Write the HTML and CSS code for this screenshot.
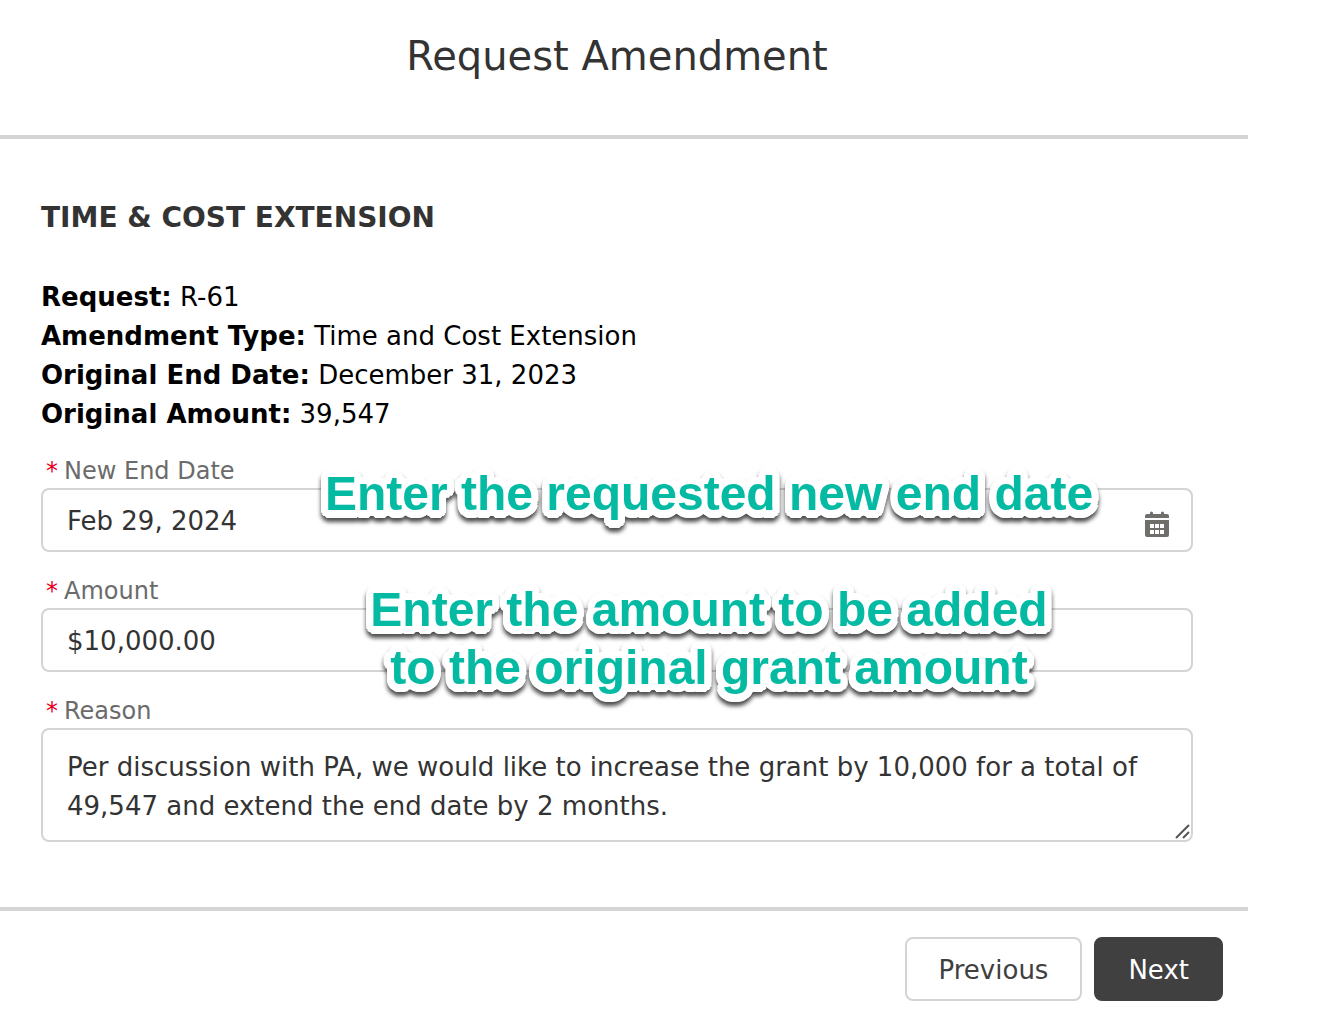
FILE: index.html
```html
<!DOCTYPE html>
<html lang="en">
<head>
  <meta charset="UTF-8">
  <meta name="viewport" content="width=device-width, initial-scale=1.0">
  <title>Request Amendment</title>
  <link rel="stylesheet" href="styles.css">
</head>
<body>
  <main class="modal">
    <header class="modal-header">
      <h1>Request Amendment</h1>
    </header>

    <form class="modal-body" id="amendment-form">
      <h2>TIME &amp; COST EXTENSION</h2>

      <ul class="summary">
        <li><b>Request:</b> R-61</li>
        <li><b>Amendment Type:</b> Time and Cost Extension</li>
        <li><b>Original End Date:</b> December 31, 2023</li>
        <li><b>Original Amount:</b> 39,547</li>
      </ul>

      <div class="field">
        <label for="end-date"><span class="required">*</span>New End Date</label>
        <div class="control">
          <input type="text" id="end-date" value="Feb 29, 2024">
          <svg class="calendar-icon" viewBox="0 0 24 26" fill="#706e6b" aria-hidden="true">
            <path d="M2 3h3V2a1.500 1.500 0 0 1 3 0v1h8V2a1.500 1.500 0 0 1 3 0v1h3a2 2 0 0 1 2 2v2H0V5a2 2 0 0 1 2-2z"/>
            <path fill-rule="evenodd" d="M0 9h24v15a2 2 0 0 1-2 2H2a2 2 0 0 1-2-2zM5 13v4h4v-4zM10 13v4h4v-4zM15 13v4h4v-4zM5 19v4h4v-4zM10 19v4h4v-4zM15 19v4h4v-4z"/>
          </svg>
        </div>
        <p class="callout callout-date">Enter the requested new end date</p>
      </div>

      <div class="field">
        <label for="amount"><span class="required">*</span>Amount</label>
        <div class="control">
          <input type="text" id="amount" value="$10,000.00">
        </div>
        <p class="callout callout-amount">Enter the amount to be added<br>to the original grant amount</p>
      </div>

      <div class="field">
        <label for="reason"><span class="required">*</span>Reason</label>
        <div class="control">
          <textarea id="reason" rows="2">Per discussion with PA, we would like to increase the grant by 10,000 for a total of 49,547 and extend the end date by 2 months.</textarea>
          <svg class="grip-icon" viewBox="0 0 15 15" stroke="#555" stroke-width="2" aria-hidden="true">
            <path d="M1 14L14 1M8 14l6-6"/>
          </svg>
        </div>
      </div>
    </form>

    <footer class="modal-footer">
      <button type="button" class="btn">Previous</button>
      <button type="submit" form="amendment-form" class="btn btn-primary">Next</button>
    </footer>
  </main>
</body>
</html>
```
FILE: styles.css
```css
* {
  box-sizing: border-box;
}
body {
  margin: 0;
  background: #fff;
  color: #333;
  font-family: Verdana, "DejaVu Sans", sans-serif;
  font-size: 26px;
  line-height: 39px;
}
.modal {
  margin-right: 80px;
}
.modal-header {
  padding: 31px 55px 54px 41px;
  border-bottom: 4px solid #d4d4d4;
  text-align: center;
}
h1 {
  margin: 0;
  font-size: 40px;
  font-weight: 400;
  line-height: 50px;
}
.modal-body {
  padding: 59px 55px 65px 41px;
}
h2 {
  margin: 0 0 40px;
  font-size: 28px;
  font-weight: 700;
  line-height: 40px;
}
.summary {
  margin: 0 0 20px;
  padding: 0;
  list-style: none;
  color: #000;
}
.field {
  position: relative;
  margin-bottom: 22px;
}
.field:last-child {
  margin-bottom: 0;
}
label {
  display: block;
  padding-left: 5px;
  color: #6b6b6b;
  font-size: 24px;
  line-height: 34px;
}
.required {
  margin-right: 6px;
  color: #ea001e;
}
.control {
  position: relative;
}
input,
textarea {
  display: block;
  width: 100%;
  border: 2px solid #d4d4d4;
  border-radius: 8px;
  background: #fff;
  color: #333;
  font: inherit;
}
input {
  height: 64px;
  padding: 2px 24px 0;
}
textarea {
  padding: 18px 24px 14px;
  resize: none;
  overflow: hidden;
}
.calendar-icon {
  position: absolute;
  right: 24px;
  top: 23px;
  width: 24px;
  height: 26px;
}
.grip-icon {
  position: absolute;
  right: 3px;
  bottom: 3px;
  width: 15px;
  height: 15px;
}

/* Instruction text laid over the fields */
.callout {
  position: absolute;
  left: 184px;
  right: 0;
  margin: 0;
  color: #04baa3;
  font-family: Arial, "Liberation Sans", sans-serif;
  font-size: 48px;
  font-weight: 700;
  line-height: 58px;
  text-align: center;
  /* round white outline */
  text-shadow:
    7px 0 #fff, 7px 2px #fff, 7px 3px #fff, 6px 5px #fff, 5px 6px #fff, 3px 7px #fff, 2px 8px #fff,
    0 8px #fff, -2px 8px #fff, -3px 7px #fff, -5px 6px #fff, -6px 5px #fff, -7px 3px #fff, -7px 2px #fff,
    -7px 0 #fff, -7px -2px #fff, -6px -4px #fff, -5px -5px #fff, -4px -6px #fff, -2px -7px #fff,
    0 -7px #fff, 2px -7px #fff, 4px -6px #fff, 5px -5px #fff, 6px -4px #fff, 7px -2px #fff,
    3px 0 #fff, 0 3px #fff, -3px 0 #fff, 0 -3px #fff;
  filter: drop-shadow(0 4px 2px rgba(0, 0, 0, 0.7));
  pointer-events: none;
}
.callout-date {
  top: 11px;
}
.callout-amount {
  top: 7px;
}

.modal-footer {
  display: flex;
  justify-content: flex-end;
  gap: 12px;
  padding: 26px 25px 19px;
  border-top: 4px solid #d4d4d4;
}
.btn {
  height: 64px;
  padding: 2px 32px 0;
  border: 2px solid #d4d4d4;
  border-radius: 8px;
  background: #fff;
  color: #404040;
  font: inherit;
}
.btn-primary {
  border-color: #404040;
  background: #404040;
  color: #fff;
}
```
